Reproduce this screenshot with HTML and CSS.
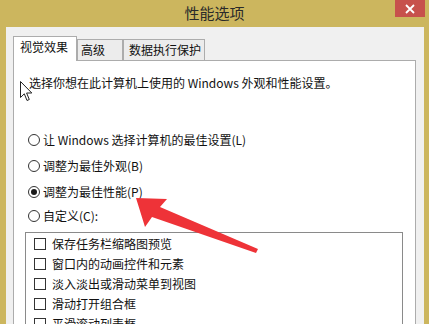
FILE: index.html
```html
<!DOCTYPE html>
<html lang="zh-CN">
<head>
<meta charset="utf-8">
<title>性能选项</title>
<link rel="stylesheet" href="styles.css">
</head>
<body>
<div class="window">
  <div class="titlebar">
    <div class="title">性能选项</div>
    <div class="close">
      <svg width="10" height="10" viewBox="0 0 10 10"><path d="M1 1 L9 9 M9 1 L1 9" stroke="#fff" stroke-width="1.8" fill="none"/></svg>
    </div>
  </div>
  <div class="frame">
    <div class="tabs">
      <div class="tab tab-active t1">视觉效果</div>
      <div class="tab t2">高级</div>
      <div class="tab t3">数据执行保护</div>
    </div>
    <div class="panel">
      <p class="desc">选择你想在此计算机上使用的 Windows 外观和性能设置。</p>
      <div class="radios">
        <div class="radio-row"><span class="radio"></span><span>让 Windows 选择计算机的最佳设置(L)</span></div>
        <div class="radio-row"><span class="radio"></span><span>调整为最佳外观(B)</span></div>
        <div class="radio-row"><span class="radio checked"></span><span>调整为最佳性能(P)</span></div>
        <div class="radio-row last"><span class="radio"></span><span>自定义(C):</span></div>
      </div>
      <div class="listbox">
        <div class="check-row"><span class="check"></span><span>保存任务栏缩略图预览</span></div>
        <div class="check-row"><span class="check"></span><span>窗口内的动画控件和元素</span></div>
        <div class="check-row"><span class="check"></span><span>淡入淡出或滑动菜单到视图</span></div>
        <div class="check-row"><span class="check"></span><span>滑动打开组合框</span></div>
        <div class="check-row"><span class="check"></span><span>平滑滚动列表框</span></div>
      </div>
    </div>
  </div>
  <svg class="cursor" width="14" height="21" viewBox="0 0 14 21"><path d="M0.5 0.5 L0.5 16.5 L4.3 12.8 L7 19.5 L9.3 18.5 L6.6 12 L11.8 12 Z" fill="#fff" stroke="#222" stroke-width="1" stroke-linejoin="round"/></svg>
  <svg class="arrow" width="429" height="324" viewBox="0 0 429 324"><polygon points="136,198 167,199 160,207 258,249 256,253 152,217 145,227" fill="#ee3338"/></svg>
</div>
</body>
</html>
```
FILE: styles.css
```css
* { box-sizing: border-box; }
html, body { margin: 0; padding: 0; }
body {
  background: #ccb65e;
  font-family: "Noto Sans CJK SC", "Noto Sans", sans-serif;
  font-size: 12px;
  color: #111;
}
.window {
  position: relative;
  width: 429px;
  height: 324px;
  overflow: hidden;
  background: #ccb65e;
  display: flex;
  flex-direction: column;
}
.titlebar {
  height: 28px;
  display: grid;
  grid-template-columns: 1fr auto;
}
.title {
  font-size: 15px;
  line-height: 28px;
  color: #2a2a2a;
  text-align: center;
  padding-left: 34px;
  margin-top: -1px;
}
.close {
  width: 30px;
  height: 17px;
  margin-right: 4px;
  background: #c7514c;
  display: flex;
  align-items: center;
  justify-content: center;
}
.frame {
  flex: 1;
  margin: 0 5px 0 6px;
  background: #f0f0f0;
  padding: 9px 8px 0 7px;
  display: flex;
  flex-direction: column;
}
.tabs {
  display: flex;
  align-items: flex-end;
  height: 24px;
}
.tab {
  border: 1px solid #acacac;
  border-bottom: none;
  background: #ececec;
  line-height: 16px;
  height: 21px;
  padding: 2px 0 2px 0;
  white-space: nowrap;
}
.tab-active {
  background: #fff;
  height: 25px;
  margin-bottom: -1px;
  position: relative;
  z-index: 1;
  padding-top: 2px;
}
.t1 { width: 64px; padding-left: 6px; }
.t2 { width: 46px; padding-left: 3px; }
.t3 { width: 82px; padding-left: 5px; }
.panel {
  flex: 1;
  background: #fff;
  border: 1px solid #acacac;
  border-bottom: none;
  padding: 14px 0 0 11px;
}
.desc {
  margin: 0 0 0 4px;
  line-height: 16px;
}
.radios {
  margin-top: 41px;
  display: flex;
  flex-direction: column;
  gap: 10px;
}
.radio-row {
  display: flex;
  align-items: center;
  height: 16px;
  line-height: 16px;
  gap: 3px;
  padding-left: 3px;
}
.radio-row.last { margin-top: -2px; }
.radio {
  width: 12px;
  height: 12px;
  border: 1px solid #333;
  border-radius: 50%;
  background: #fff;
  display: flex;
  align-items: center;
  justify-content: center;
}
.radio.checked::after {
  content: "";
  width: 6px;
  height: 6px;
  border-radius: 50%;
  background: #1a1a1a;
}
.listbox {
  margin: 8px 0 0 0;
  width: 378px;
  flex: 1;
  border: 1px solid #8a8a8a;
  border-bottom: none;
  padding: 1px 0 0 8px;
}
.check-row {
  display: flex;
  align-items: center;
  height: 20px;
  line-height: 16px;
  gap: 6px;
}
.check {
  width: 12px;
  height: 12px;
  border: 1px solid #333;
  background: #fff;
}
.cursor {
  position: absolute;
  left: 20px;
  top: 81px;
}
.arrow {
  position: absolute;
  left: 0;
  top: 0;
}
```
